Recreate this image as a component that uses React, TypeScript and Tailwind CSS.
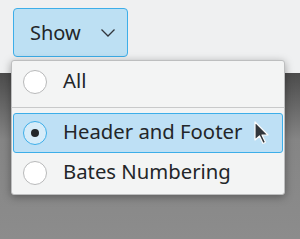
import React from "react";

const font = { fontFamily: '"Noto Sans", "Open Sans", sans-serif' };

function Radio({ checked }: { checked?: boolean }) {
  return (
    <div
      className={
        "w-[24px] h-[24px] rounded-full border flex items-center justify-center shrink-0 " +
        (checked ? "border-[#3daee9] bg-[#d6ecf9]" : "border-[#b8b9ba] bg-white")
      }
    >
      {checked && <div className="w-[8px] h-[8px] rounded-full bg-[#232629]" />}
    </div>
  );
}

function Item({ label, checked, active }: { label: string; checked?: boolean; active?: boolean }) {
  return (
    <div
      className={
        "relative flex items-center gap-[16px] h-[40px] pl-[9px] mx-[1px] rounded-[3px] border " +
        (active ? "bg-[#bee0f5] border-[#3daee9]" : "border-transparent")
      }
    >
      <Radio checked={checked} />
      <span className="text-[20.3px] leading-none text-[#232629] -mt-[3px]">{label}</span>
      {active && (
        <svg className="absolute left-[239px] top-[7px]" width="16" height="24" viewBox="0 0 16 24">
          <path d="M2 1 L2 19 L6.5 15 L10 22.5 L12.5 21.3 L9 14 L15 14 Z" fill="#31363b" stroke="#fcfcfc" strokeWidth="1.2" strokeLinejoin="round" />
        </svg>
      )}
    </div>
  );
}

export default function App() {
  return (
    <div className="relative w-[300px] h-[239px] overflow-hidden bg-[#eff0f1]" style={font}>
      <div className="absolute left-0 right-0 top-[73px] bottom-0 bg-gradient-to-b from-[#4c4c4c] via-[#858585] via-40% to-[#8c8c8c]" />
      <div className="relative pt-[8px] pl-[13px]">
        <div className="w-[115px] h-[49px] rounded-[4px] border border-[#3daee9] bg-[#bde0f3] flex items-center pl-[16px] gap-[19px] text-[20px] text-[#232629]">
          <span className="leading-none">Show</span>
          <svg width="16" height="10" viewBox="0 0 16 10">
            <path d="M1.5 1.5 L8 8 L14.5 1.5" fill="none" stroke="#31363b" strokeWidth="1.3" />
          </svg>
        </div>
      </div>
      <div className="absolute left-[11px] top-[60px] w-[274px] rounded-[3px] border border-[#bdbebf] bg-[#f3f4f4] shadow-[0_2px_8px_rgba(0,0,0,0.35)] py-[1px]">
        <Item label="All" />
        <div className="h-[11px] flex items-center">
          <div className="h-px w-full bg-[#c8c9ca]" />
        </div>
        <Item label="Header and Footer" checked active />
        <Item label="Bates Numbering" />
      </div>
    </div>
  );
}
